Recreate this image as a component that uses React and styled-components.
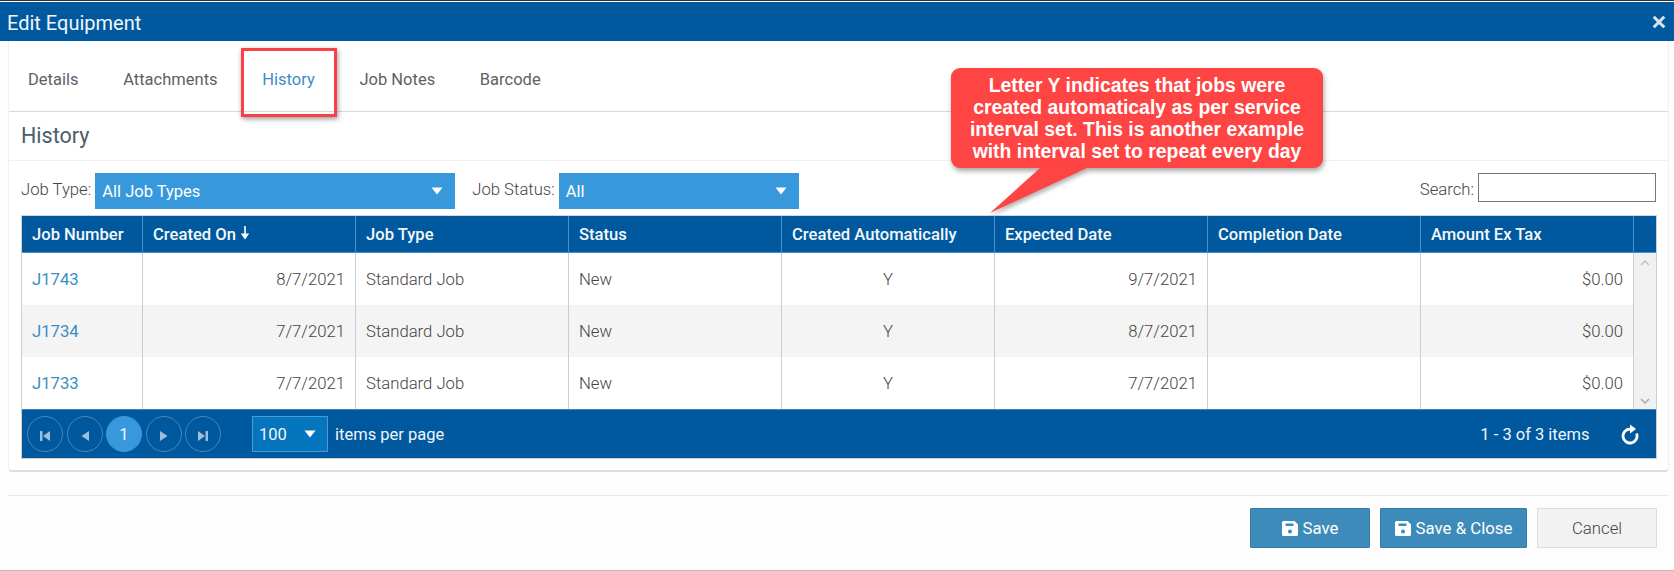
import React from 'react';
import styled, { createGlobalStyle } from 'styled-components';

const jobs = [
  { id: 'J1743', created: '8/7/2021', expected: '9/7/2021' },
  { id: 'J1734', created: '7/7/2021', expected: '8/7/2021' },
  { id: 'J1733', created: '7/7/2021', expected: '7/7/2021' },
];

const columns = ['Job Number', 'Created On', 'Job Type', 'Status', 'Created Automatically', 'Expected Date', 'Completion Date', 'Amount Ex Tax'];
const tabs = ['Details', 'Attachments', 'History', 'Job Notes', 'Barcode'];

function Caret() {
  return (
    <svg width="12" height="8" viewBox="0 0 12 8">
      <path d="M0.5 0.5h11L6 7.5z" fill="#fff" />
    </svg>
  );
}

function SaveIcon() {
  return (
    <svg width="16" height="15" viewBox="0 0 16 15">
      <path
        fillRule="evenodd"
        d="M1.500 0H12.500L16 3.500v10A1.500 1.500 0 0 1 14.500 15h-13A1.500 1.500 0 0 1 0 13.500v-12A1.500 1.500 0 0 1 1.500 0zM3.500 2.500v2.500h8V2.500zM8 8.500a2 2 0 1 0 0 4a2 2 0 1 0 0-4z"
        fill="#fff"
      />
    </svg>
  );
}

function PagerIcon({ dir, edge }) {
  return (
    <PagerGlyph viewBox="0 0 12 12" $flip={dir === 'right'}>
      <path d={edge ? 'M1 1h2.500v10H1zM11 1v10L4 6z' : 'M10 1v10L2.500 6z'} fill="#9dbfdc" />
    </PagerGlyph>
  );
}

function App() {
  return (
    <Page>
      <GlobalStyle />
      <TitleBar>
        <Title>Edit Equipment</Title>
        <CloseIcon viewBox="0 0 12 12">
          <path d="M1.500 1.500l9 9M10.500 1.500l-9 9" stroke="#d7e4f0" strokeWidth="2.600" fill="none" />
        </CloseIcon>
      </TitleBar>

      <Card>
        <TabBar>
          {tabs.map(tab => (
            <Tab key={tab} $active={tab === 'History'}>
              {tab}
            </Tab>
          ))}
        </TabBar>
        <SectionTitle>History</SectionTitle>
        <Filters>
          <Label>Job Type:</Label>
          <Select $width={360}>
            All Job Types
            <Caret />
          </Select>
          <Label $gap={17}>Job Status:</Label>
          <Select $width={240}>
            All
            <Caret />
          </Select>
          <SearchGroup>
            <Label>Search:</Label>
            <SearchInput />
          </SearchGroup>
        </Filters>

        <Grid>
          <HeaderRow>
            {columns.map(col => (
              <HeaderCell key={col}>
                {col}
                {col === 'Created On' && (
                  <SortArrow viewBox="0 0 10 14">
                    <path d="M4.200 0h1.600v8H4.200z M0.800 7.500h8.400L5 13.500z" fill="#fff" />
                  </SortArrow>
                )}
              </HeaderCell>
            ))}
            <HeaderCell />
          </HeaderRow>
          <Body>
            <Rows>
              {jobs.map((job, i) => (
                <Row key={job.id} $alt={i % 2 === 1}>
                  <Cell>
                    <JobLink>{job.id}</JobLink>
                  </Cell>
                  <Cell $align="right">{job.created}</Cell>
                  <Cell>Standard Job</Cell>
                  <Cell>New</Cell>
                  <Cell $align="center">Y</Cell>
                  <Cell $align="right">{job.expected}</Cell>
                  <Cell />
                  <Cell $align="right">$0.00</Cell>
                </Row>
              ))}
            </Rows>
            <Scrollbar>
              <svg width="10" height="7" viewBox="0 0 10 7">
                <path d="M1 6l4-4 4 4" stroke="#c2c2c2" strokeWidth="1.500" fill="none" />
              </svg>
              <svg width="10" height="7" viewBox="0 0 10 7">
                <path d="M1 1l4 4 4-4" stroke="#a8a8a8" strokeWidth="1.500" fill="none" />
              </svg>
            </Scrollbar>
          </Body>
          <Pager>
            <PagerButton>
              <PagerIcon dir="left" edge />
            </PagerButton>
            <PagerButton>
              <PagerIcon dir="left" />
            </PagerButton>
            <PagerButton $active>1</PagerButton>
            <PagerButton>
              <PagerIcon dir="right" />
            </PagerButton>
            <PagerButton>
              <PagerIcon dir="right" edge />
            </PagerButton>
            <PageSize>
              100
              <Caret />
            </PageSize>
            <PagerText>items per page</PagerText>
            <PagerInfo>1 - 3 of 3 items</PagerInfo>
            <svg width="20" height="21" viewBox="0 0 20 21">
              <path d="M16.600 9.600A7 7 0 1 1 10 5" stroke="#fff" strokeWidth="2.800" fill="none" />
              <path d="M10 0.500L16 5l-6 4.500z" fill="#fff" />
            </svg>
          </Pager>
        </Grid>
      </Card>

      <Footer>
        <ActionButton $width={120}>
          <SaveIcon />
          Save
        </ActionButton>
        <ActionButton $width={147}>
          <SaveIcon />
          Save &amp; Close
        </ActionButton>
        <CancelButton>Cancel</CancelButton>
      </Footer>

      <TabHighlight />
      <Callout>
        <CalloutTail viewBox="0 0 100 46">
          <path d="M51 0L1 45L98 0z" fill="#ff4444" />
        </CalloutTail>
        Letter Y indicates that jobs were
        <br />
        created automaticaly as per service
        <br />
        interval set. This is another example
        <br />
        with interval set to repeat every day
      </Callout>
    </Page>
  );
}

const GlobalStyle = createGlobalStyle`
  html, body {
    margin: 0;
    padding: 0;
    background: #fdfdfd;
  }
  * {
    box-sizing: border-box;
  }
`;

const Page = styled.div`
  position: relative;
  width: 1674px;
  height: 571px;
  padding-top: 2px;
  border-top: 1px solid #333;
  border-bottom: 1px solid #bbb;
  overflow: hidden;
  background: #fdfdfd;
  font-family: Roboto, 'Liberation Sans', sans-serif;
  font-size: 16.500px;
  color: #666;
`;

const TitleBar = styled.div`
  display: flex;
  align-items: center;
  justify-content: space-between;
  height: 39px;
  margin-top: -1px;
  padding: 2px 8px 0 7px;
  background: #00599e;
`;

const Title = styled.span`
  font-size: 20px;
  color: #f2f6fa;
`;

const CloseIcon = styled.svg`
  width: 14px;
  height: 14px;
  margin-top: -2px;
`;

const Card = styled.div`
  display: flex;
  flex-direction: column;
  width: 1661px;
  height: 431px;
  margin-left: 8px;
  padding: 0 12px;
  background: #fff;
  border: 1px solid #f0f0f0;
  border-top: 0;
  border-bottom: 2px solid #ddd;
  border-radius: 0 0 4px 4px;
`;

const TabBar = styled.div`
  display: flex;
  gap: 44.700px;
  height: 71px;
  margin: 0 -12px;
  padding: 28px 0 0 19px;
  border-bottom: 1px solid #d8d8e2;
`;

const Tab = styled.span`
  font-size: 16.500px;
  line-height: 22px;
  color: ${props => (props.$active ? '#3a8ec6' : '#5f5f5f')};
`;

const SectionTitle = styled.div`
  height: 49px;
  margin: 0 -12px;
  padding: 12px 12px 0;
  font-size: 21.500px;
  line-height: 24px;
  color: #4b5c68;
  border-bottom: 1px solid #f0f0f0;
`;

const Filters = styled.div`
  display: flex;
  align-items: flex-start;
  height: 54px;
  padding-top: 12px;
`;

const Label = styled.span`
  margin-left: ${props => props.$gap || 0}px;
  margin-right: 4px;
  font-size: 16.700px;
  font-weight: 300;
  line-height: 34px;
  color: #444;
`;

const Select = styled.div`
  display: flex;
  align-items: center;
  justify-content: space-between;
  width: ${props => props.$width}px;
  height: 36px;
  padding: 0 12px 0 7px;
  background: #3798dc;
  color: #fff;
  font-size: 16.500px;
`;

const SearchGroup = styled.div`
  display: flex;
  margin-left: auto;
`;

const SearchInput = styled.div`
  width: 178px;
  height: 29px;
  background: #fff;
  border: 1px solid #777;
`;

const Grid = styled.div`
  display: flex;
  flex-direction: column;
  width: 1636px;
  border: 1px solid #ccc;
  border-top: 1px solid #cfd8e0;
`;

const rowColumns = '121px repeat(7, 213px)';

const HeaderRow = styled.div`
  display: grid;
  grid-template-columns: ${rowColumns} 22px;
  height: 37px;
  background: #00599e;
  border-bottom: 1px solid #4a90c8;
`;

const HeaderCell = styled.div`
  display: flex;
  align-items: center;
  padding: 1px 0 0 10px;
  font-size: 16.600px;
  font-weight: 500;
  color: #f4f7fa;
  border-right: 1px solid #4a90c8;
  &:last-child {
    border-right: 0;
  }
`;

const SortArrow = styled.svg`
  width: 10px;
  height: 14px;
  margin: -3px 0 0 4px;
`;

const Body = styled.div`
  display: flex;
`;

const Rows = styled.div`
  flex: 1;
`;

const Row = styled.div`
  display: grid;
  grid-template-columns: ${rowColumns};
  height: 52px;
  background: ${props => (props.$alt ? '#f4f4f4' : '#fff')};
`;

const Cell = styled.div`
  display: flex;
  align-items: center;
  justify-content: ${props => (props.$align === 'right' ? 'flex-end' : props.$align === 'center' ? 'center' : 'flex-start')};
  padding: 0 10px;
  border-right: 1px solid #ccc;
  font-size: 16.700px;
  font-weight: 300;
  color: #444;
`;

const JobLink = styled.span`
  font-weight: 400;
  color: #3a8ec6;
`;

const Scrollbar = styled.div`
  display: flex;
  flex-direction: column;
  align-items: center;
  justify-content: space-between;
  width: 22px;
  padding: 6px 0 4px;
  background: #f1f1f1;
`;

const Pager = styled.div`
  display: flex;
  align-items: center;
  gap: 3.500px;
  height: 49px;
  padding: 0 16px 0 5px;
  background: #00599e;
  border-top: 1px solid #3b85c4;
  color: #f0f5fa;
`;

const PagerButton = styled.div`
  display: flex;
  align-items: center;
  justify-content: center;
  width: 36px;
  height: 36px;
  border-radius: 50%;
  border: 1px solid ${props => (props.$active ? '#3798dc' : '#4a86b8')};
  background: ${props => (props.$active ? '#3798dc' : 'transparent')};
  font-size: 16.500px;
`;

const PagerGlyph = styled.svg`
  width: 12px;
  height: 12px;
  margin-top: 3px;
  transform: ${props => (props.$flip ? 'scaleX(-1)' : 'none')};
`;

const PageSize = styled.div`
  display: flex;
  align-items: center;
  justify-content: space-between;
  width: 76px;
  height: 36px;
  margin-left: 27.500px;
  padding: 0 11px 0 6px;
  background: #0575bd;
  border: 1px solid #4a9ad6;
  font-size: 16.500px;
`;

const PagerText = styled.span`
  margin-left: 3.500px;
  font-size: 16.500px;
`;

const PagerInfo = styled.span`
  margin-left: auto;
  margin-right: 27px;
  font-size: 16.500px;
`;

const Footer = styled.div`
  display: flex;
  justify-content: flex-end;
  gap: 10px;
  width: 1661px;
  margin: 23px 0 0 8px;
  padding: 12px 12px 0 0;
  border-top: 1px solid #e8e8e8;
`;

const ActionButton = styled.div`
  display: flex;
  align-items: center;
  justify-content: center;
  gap: 5px;
  width: ${props => props.$width}px;
  height: 40px;
  background: #3d8bbb;
  border: 1px solid #357ba8;
  border-radius: 1px;
  font-size: 16.800px;
  color: #fff;
`;

const CancelButton = styled.div`
  display: flex;
  align-items: center;
  justify-content: center;
  width: 120px;
  height: 40px;
  background: #f2f2f2;
  border: 1px solid #ddd;
  font-size: 16.800px;
  font-weight: 300;
  color: #444;
`;

const TabHighlight = styled.div`
  position: absolute;
  left: 241px;
  top: 47px;
  width: 96px;
  height: 69px;
  border: 3px solid #f64146;
  box-shadow: 1px 2px 5px rgba(0, 0, 0, 0.4);
`;

const Callout = styled.div`
  position: absolute;
  left: 951px;
  top: 67px;
  width: 372px;
  height: 100px;
  padding-top: 6px;
  background: #ff4444;
  border-radius: 9px;
  box-shadow: 1px 3px 5px rgba(0, 0, 0, 0.35);
  font-family: 'Liberation Sans', Arial, sans-serif;
  font-size: 19.400px;
  font-weight: 700;
  line-height: 22px;
  text-align: center;
  color: #fff;
`;

const CalloutTail = styled.svg`
  position: absolute;
  left: 38px;
  top: 100px;
  width: 100px;
  height: 46px;
  filter: drop-shadow(1px 3px 2px rgba(0, 0, 0, 0.3));
`;

export default App;
